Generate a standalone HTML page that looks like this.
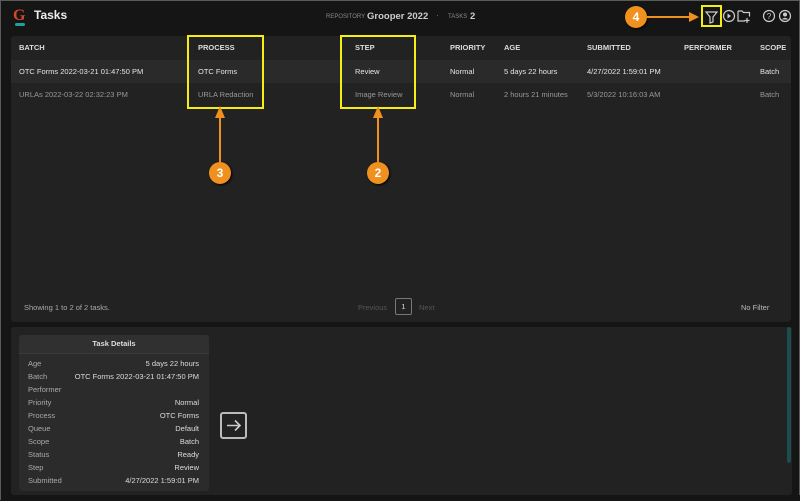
<!DOCTYPE html>
<html><head><style>
*{margin:0;padding:0;box-sizing:border-box}
body{width:800px;height:500px;background:#151515;font-family:"Liberation Sans",sans-serif;position:relative;overflow:hidden;border:1px solid #5a5a5a}
.a{position:absolute;white-space:nowrap}
.p{position:absolute;background:#222;border-radius:3px}
.h{font-size:7.5px;font-weight:bold;color:#ddd;top:42px}
.r1{font-size:7.5px;color:#e6e6e6;top:66px}
.r2{font-size:7.5px;color:#999;top:89px}
.yb{position:absolute;border:2px solid #f5ee16}
.c{position:absolute;width:22px;height:22px;border-radius:50%;background:#f0901e;color:#fff;font-weight:bold;font-size:12px;text-align:center;line-height:22px;box-shadow:1px 1px 2px #000}
.dl{font-size:7.5px;color:#aaa;left:27px}
.dr{font-size:7.5px;color:#ddd;right:600px}
</style></head><body>
<div class="a" style="left:12px;top:6px;font-family:'Liberation Serif',serif;font-size:16px;color:#d9462b;font-weight:bold">G</div>
<div class="a" style="left:14px;top:22px;width:10px;height:3px;background:#1aa39a;border-radius:2px"></div>
<div class="a" style="left:33px;top:7px;font-size:12px;font-weight:bold;color:#eee">Tasks</div>
<div class="a" style="left:325px;top:13px;font-size:6px;color:#888">REPOSITORY</div>
<div class="a" style="left:366px;top:10px;font-size:9.5px;font-weight:bold;color:#ccc">Grooper 2022</div>
<div class="a" style="left:435px;top:10px;font-size:8px;color:#888">·</div>
<div class="a" style="left:447px;top:13px;font-size:6px;color:#888">TASKS</div>
<div class="a" style="left:469px;top:10px;font-size:9.5px;font-weight:bold;color:#ccc">2</div>
<svg class="a" style="left:700px;top:4px" width="100" height="22" viewBox="0 0 100 22">
<rect x="1" y="1" width="19" height="20" fill="none" stroke="#f5ee16" stroke-width="2"/>
<path d="M5 7h11l-4 5v5l-3 1v-6z" fill="none" stroke="#ccc" stroke-width="1.2"/>
<circle cx="28" cy="11" r="5.5" fill="none" stroke="#ccc" stroke-width="1.2"/><path d="M26.5 8.5v5l3.5-2.5z" fill="#ccc"/>
<path d="M37 6h4l1.5 1.5h6v4M37 6v10h7" fill="none" stroke="#ccc" stroke-width="1.2"/><path d="M46 13v5M43.5 15.5h5" stroke="#ccc" stroke-width="1.2"/>
<circle cx="68" cy="11" r="5.5" fill="none" stroke="#ccc" stroke-width="1.2"/><text x="68" y="14" font-size="8" fill="#ccc" text-anchor="middle" font-family="Liberation Sans">?</text>
<circle cx="84" cy="11" r="5.5" fill="none" stroke="#ccc" stroke-width="1.2"/><circle cx="84" cy="9.5" r="2" fill="#ccc"/><path d="M80.5 14.5q3.5-3.5 7 0" fill="#ccc"/>
</svg>
<div class="c" style="left:624px;top:5px">4</div>
<div class="a" style="left:646px;top:15px;width:44px;height:2px;background:#f0901e"></div>
<div class="a" style="left:688px;top:11px;width:0;height:0;border-left:10px solid #f0901e;border-top:5px solid transparent;border-bottom:5px solid transparent"></div>

<div class="p" style="left:10px;top:35px;width:780px;height:286px"></div>
<div class="a" style="left:10px;top:59px;width:780px;height:23px;background:#2a2a2a"></div>
<div class="a h" style="left:18px">BATCH</div><div class="a h" style="left:197px">PROCESS</div><div class="a h" style="left:354px">STEP</div><div class="a h" style="left:449px">PRIORITY</div><div class="a h" style="left:503px">AGE</div><div class="a h" style="left:586px">SUBMITTED</div><div class="a h" style="left:683px">PERFORMER</div><div class="a h" style="left:759px">SCOPE</div>
<div class="a r1" style="left:18px">OTC Forms 2022-03-21 01:47:50 PM</div><div class="a r1" style="left:197px">OTC Forms</div><div class="a r1" style="left:354px">Review</div><div class="a r1" style="left:449px">Normal</div><div class="a r1" style="left:503px">5 days 22 hours</div><div class="a r1" style="left:586px">4/27/2022 1:59:01 PM</div><div class="a r1" style="left:759px">Batch</div>
<div class="a r2" style="left:18px">URLAs 2022-03-22 02:32:23 PM</div><div class="a r2" style="left:197px">URLA Redaction</div><div class="a r2" style="left:354px">Image Review</div><div class="a r2" style="left:449px">Normal</div><div class="a r2" style="left:503px">2 hours 21 minutes</div><div class="a r2" style="left:586px">5/3/2022 10:16:03 AM</div><div class="a r2" style="left:759px">Batch</div>
<div class="yb" style="left:186px;top:34px;width:77px;height:74px"></div>
<div class="yb" style="left:339px;top:34px;width:76px;height:74px"></div>
<div class="a" style="left:218px;top:112px;width:2px;height:52px;background:#f0901e"></div>
<div class="a" style="left:214px;top:105px;width:0;height:0;border-bottom:12px solid #f0901e;border-left:5px solid transparent;border-right:5px solid transparent"></div>
<div class="a" style="left:376px;top:112px;width:2px;height:52px;background:#f0901e"></div>
<div class="a" style="left:372px;top:105px;width:0;height:0;border-bottom:12px solid #f0901e;border-left:5px solid transparent;border-right:5px solid transparent"></div>
<div class="c" style="left:208px;top:161px">3</div>
<div class="c" style="left:366px;top:161px">2</div>
<div class="a" style="left:23px;top:302px;font-size:7.5px;color:#aaa">Showing 1 to 2 of 2 tasks.</div>
<div class="a" style="left:357px;top:302px;font-size:7.5px;color:#555">Previous</div>
<div class="a" style="left:394px;top:297px;width:17px;height:17px;border:1px solid #777;border-radius:2px;font-size:7.5px;color:#ddd;text-align:center;line-height:15px">1</div>
<div class="a" style="left:418px;top:302px;font-size:7.5px;color:#555">Next</div>
<div class="a" style="left:740px;top:302px;font-size:7.5px;color:#bbb">No Filter</div>

<div class="p" style="left:10px;top:326px;width:781px;height:168px"></div>
<div class="a" style="left:786px;top:326px;width:4px;height:136px;background:#1b4e4e;border-radius:2px"></div>
<div class="a" style="left:18px;top:334px;width:190px;height:156px;background:#2b2b2b;border-radius:3px;overflow:hidden">
<div style="height:19px;background:#303030;border-bottom:1px solid #3a3a3a;font-size:7.5px;font-weight:bold;color:#ddd;text-align:center;line-height:17px">Task Details</div>
</div>
<div class="a dl" style="top:358px">Age</div><div class="a dl" style="top:371px">Batch</div><div class="a dl" style="top:384px">Performer</div><div class="a dl" style="top:397px">Priority</div><div class="a dl" style="top:410px">Process</div><div class="a dl" style="top:423px">Queue</div><div class="a dl" style="top:436px">Scope</div><div class="a dl" style="top:449px">Status</div><div class="a dl" style="top:462px">Step</div><div class="a dl" style="top:475px">Submitted</div>
<div class="a dr" style="top:358px">5 days 22 hours</div><div class="a dr" style="top:371px">OTC Forms 2022-03-21 01:47:50 PM</div><div class="a dr" style="top:397px">Normal</div><div class="a dr" style="top:410px">OTC Forms</div><div class="a dr" style="top:423px">Default</div><div class="a dr" style="top:436px">Batch</div><div class="a dr" style="top:449px">Ready</div><div class="a dr" style="top:462px">Review</div><div class="a dr" style="top:475px">4/27/2022 1:59:01 PM</div>
<div class="a" style="left:219px;top:411px;width:27px;height:27px;border:2px solid #bbb;border-radius:3px"></div>
<svg class="a" style="left:219px;top:411px" width="27" height="27"><path d="M7 13.5h13M15 8.5l5 5-5 5" fill="none" stroke="#ccc" stroke-width="1.6"/></svg>
<div class="a" style="left:0;top:494px;width:800px;height:6px;background:#151515"></div>
</body></html>
